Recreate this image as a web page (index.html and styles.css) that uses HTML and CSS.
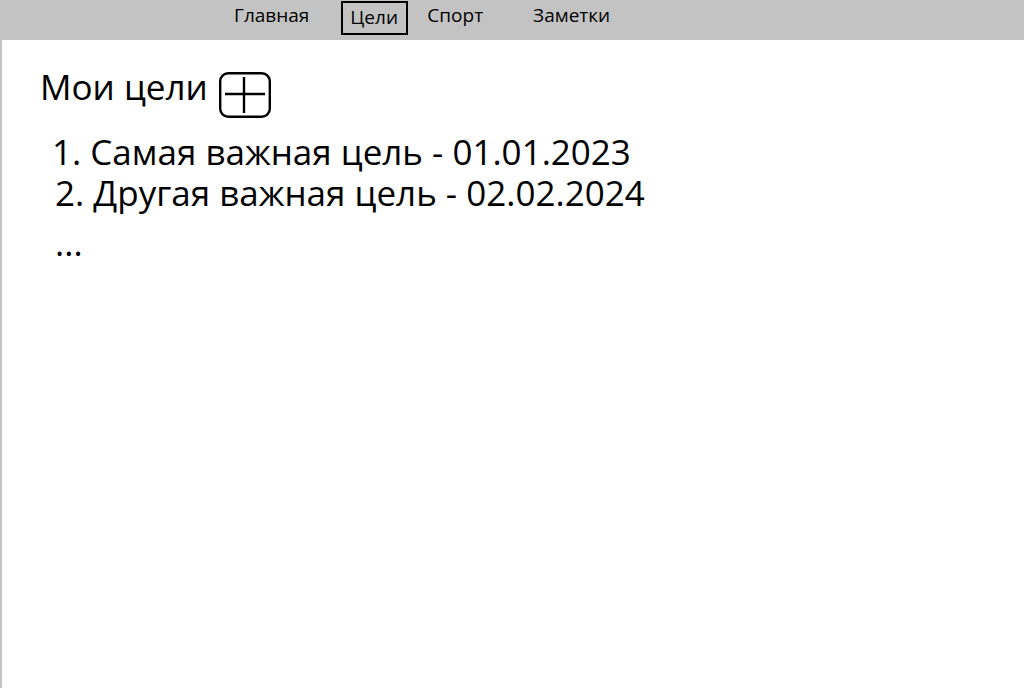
FILE: index.html
```html
<!DOCTYPE html>
<html lang="ru">
<head>
<meta charset="utf-8">
<title>Цели</title>
<link rel="stylesheet" href="styles.css">
</head>
<body>
<header class="topbar">
  <nav class="nav">
    <a class="nav-item nav-home" href="#">Главная</a>
    <a class="nav-item nav-goals active" href="#">Цели</a>
    <a class="nav-item nav-sport" href="#">Спорт</a>
    <a class="nav-item nav-notes" href="#">Заметки</a>
  </nav>
</header>
<main class="content">
  <div class="title-row">
    <h1 class="title">Мои цели</h1>
    <button class="add-btn" type="button" aria-label="Добавить">
      <svg width="52" height="46" viewBox="0 0 52 46">
        <rect x="1.2" y="1.2" width="49.6" height="43.6" rx="8" ry="8" fill="none" stroke="#000" stroke-width="2.4"/>
        <line x1="6" y1="22" x2="46" y2="22" stroke="#000" stroke-width="2.4"/>
        <line x1="25" y1="5" x2="25" y2="41" stroke="#000" stroke-width="2.4"/>
      </svg>
    </button>
  </div>
  <ol class="goals">
    <li class="goal goal-first">1. Самая важная цель - 01.01.2023</li>
    <li class="goal">2. Другая важная цель - 02.02.2024</li>
    <li class="goal more">...</li>
  </ol>
</main>
</body>
</html>
```
FILE: styles.css
```css
html, body {
  margin: 0;
  padding: 0;
  background: #fff;
}
body {
  font-family: "Open Sans", "Noto Sans", sans-serif;
  color: #000;
}
.topbar {
  height: 40px;
  background: #c3c3c3;
}
.nav {
  display: flex;
  align-items: flex-start;
  padding-left: 234px;
  height: 100%;
}
.nav-item {
  color: #000;
  text-decoration: none;
  font-size: 19px;
  line-height: 30px;
}
.nav-goals {
  margin-left: 32px;
  margin-top: 1px;
  width: 67px;
  height: 34px;
  box-sizing: border-box;
  padding: 0 0 0 7px;
  border: 2px solid #000;
  line-height: 28px;
}
.nav-sport { margin-left: 19px; }
.nav-notes { margin-left: 50px; }
.content {
  border-left: 2px solid #c3c3c3;
  min-height: 648px;
  box-sizing: border-box;
  padding: 25px 0 0 38px;
}
.title-row {
  display: flex;
  align-items: flex-start;
  gap: 11px;
}
.title {
  margin: 0;
  font-weight: normal;
  font-size: 35px;
  line-height: 44px;
}
.add-btn {
  border: 0;
  padding: 0;
  margin: 7px 0 0 0;
  background: none;
  display: flex;
}
.goals {
  list-style: none;
  margin: 13px 0 0 0;
  padding: 0 0 0 15px;
}
.goal {
  font-size: 35px;
  line-height: 41px;
}
.goal-first { margin-left: -3px; }
.more { margin-top: 9px; }
```
